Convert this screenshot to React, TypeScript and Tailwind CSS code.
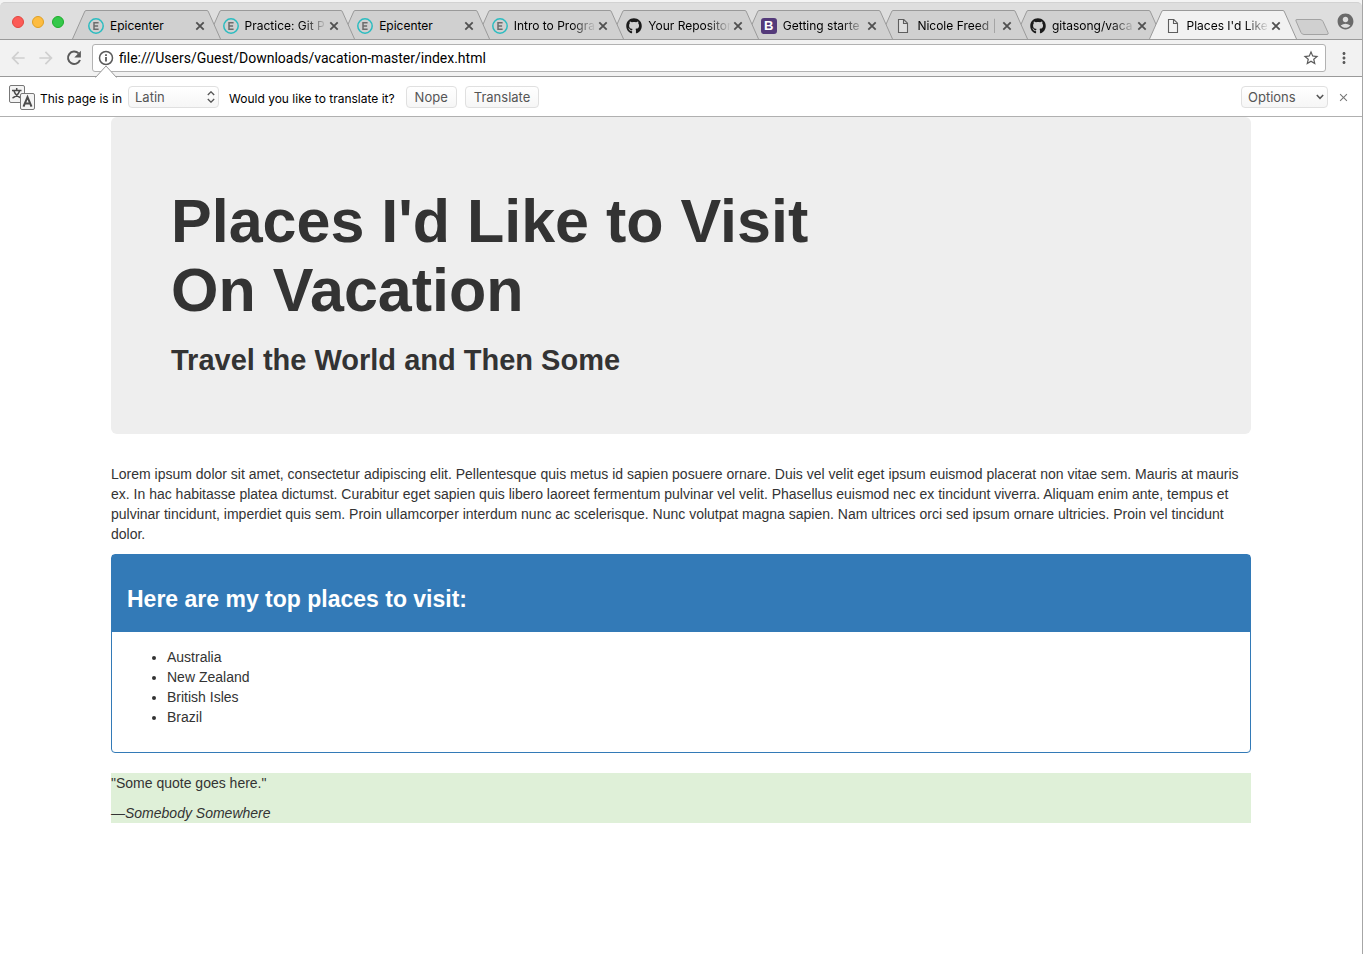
import type { ReactNode } from 'react';
import { FaGithub } from 'react-icons/fa';
import { MdAccountCircle, MdArrowBack, MdArrowForward, MdClose, MdMoreVert, MdStarBorder } from 'react-icons/md';

function EpicenterIcon() {
  return (
    <svg viewBox="0 0 16 16" className="size-4 shrink-0" aria-hidden="true">
      <circle cx="8" cy="8" r="7.2" fill="none" stroke="#2bbcc0" strokeWidth="1.5" />
      <path d="M10.6 4.8H6v6.4h4.6M6 8h4.1" fill="none" stroke="#6c6c6c" strokeWidth="1.5" />
    </svg>
  );
}

function BootstrapIcon() {
  return (
    <span className="flex size-4 shrink-0 items-center justify-center rounded-[3px] bg-[#543a7a] font-['Liberation_Sans',sans-serif] text-[13px] leading-none font-bold text-white">
      B
    </span>
  );
}

function PageIcon() {
  return (
    <svg viewBox="0 0 16 16" className="size-4 shrink-0" aria-hidden="true">
      <path d="M3.5 1.5h5.3l3.7 3.7v9.3h-9zM8.5 1.5v4h4" fill="#f5f5f5" fillOpacity=".4" stroke="#5e5e5e" strokeWidth="1.1" />
    </svg>
  );
}

function ReloadIcon() {
  return (
    <svg viewBox="0 0 20 20" className="size-5" aria-hidden="true">
      <path d="M14.6 5.4A6.2 6.2 0 1 0 16 12" fill="none" stroke="currentColor" strokeWidth="2" />
      <path d="M16.900 2.800v6.600h-6.600z" fill="currentColor" />
    </svg>
  );
}

function InfoIcon() {
  return (
    <svg viewBox="0 0 18 18" className="size-[18px] shrink-0 text-[#5a5a5a]" aria-hidden="true">
      <circle cx="9" cy="9" r="6.5" fill="none" stroke="currentColor" strokeWidth="1.5" />
      <path d="M9 8v4.5M9 5.2v1.7" stroke="currentColor" strokeWidth="1.8" />
    </svg>
  );
}

type Tab = { title: string; icon: ReactNode; z: string; active?: boolean };

const tabs: Tab[] = [
  { title: 'Epicenter', icon: <EpicenterIcon />, z: 'z-[8]' },
  { title: 'Practice: Git P', icon: <EpicenterIcon />, z: 'z-[7]' },
  { title: 'Epicenter', icon: <EpicenterIcon />, z: 'z-[6]' },
  { title: 'Intro to Progra', icon: <EpicenterIcon />, z: 'z-[5]' },
  { title: 'Your Repositor', icon: <FaGithub className="size-4 shrink-0 text-[#1b1b1b]" />, z: 'z-[4]' },
  { title: 'Getting starte', icon: <BootstrapIcon />, z: 'z-[3]' },
  { title: 'Nicole Freed |', icon: <PageIcon />, z: 'z-[2]' },
  { title: 'gitasong/vaca', icon: <FaGithub className="size-4 shrink-0 text-[#1b1b1b]" />, z: 'z-[1]' },
  { title: "Places I'd Like", icon: <PageIcon />, z: 'z-[9]', active: true },
];

function TabItem({ tab }: { tab: Tab }) {
  const fill = tab.active ? '#f2f2f2' : '#d0d0d0';
  const fade = tab.title === 'Epicenter' ? '' : 'mask-r-from-[calc(100%-24px)] mask-r-to-100%';
  return (
    <li className={`relative -mr-[14px] flex h-[29px] min-w-0 flex-1 ${tab.z} ${tab.active ? '-mb-px' : ''}`}>
      <svg viewBox="0 0 14 29" className="h-[29px] w-[14px] shrink-0" aria-hidden="true">
        <path d="M.5 29 L12.5 2 Q13 .5 14 .5 V29z" fill={fill} />
        <path d="M.5 29 L12.5 2 Q13 .5 14 .5" fill="none" stroke="#9a9a9a" />
      </svg>
      <div className={`flex min-w-0 flex-1 items-center border-t border-[#9a9a9a] pt-px pl-[2px] ${tab.active ? 'bg-[#f2f2f2]' : 'bg-[#d0d0d0]'}`}>
        {tab.icon}
        <a href="#" className={`ml-[6px] min-w-0 flex-1 overflow-hidden text-xs whitespace-nowrap text-black ${fade}`}>
          {tab.title}
        </a>
        <button type="button" aria-label="Close tab" className="flex size-[14px] shrink-0 items-center justify-center text-[#505050]">
          <svg viewBox="0 0 14 14" className="size-[14px]" aria-hidden="true">
            <path d="M3.3 3.3l7.4 7.4M10.7 3.3l-7.4 7.4" stroke="currentColor" strokeWidth="1.8" />
          </svg>
        </button>
      </div>
      <svg viewBox="0 0 14 29" className="h-[29px] w-[14px] shrink-0" aria-hidden="true">
        <path d="M0 .5 Q1 .5 1.5 2 L13.5 29 H0z" fill={fill} />
        <path d="M0 .5 Q1 .5 1.5 2 L13.5 29" fill="none" stroke="#9a9a9a" />
      </svg>
    </li>
  );
}

function TabStrip() {
  return (
    <div className="flex h-[38px] items-end rounded-t-[5px] border-t border-b border-t-[#d2d2d2] border-b-[#9a9a9a] bg-[#dedede]">
      <div className="flex h-full w-[72px] shrink-0 items-center gap-2 pt-[2px] pl-3">
        <button type="button" aria-label="Close window" className="size-3 rounded-full border border-[#e2463f] bg-[#fc5b57]" />
        <button type="button" aria-label="Minimize window" className="size-3 rounded-full border border-[#dfa023] bg-[#fdbc40]" />
        <button type="button" aria-label="Zoom window" className="size-3 rounded-full border border-[#1dad2c] bg-[#34c84a]" />
      </div>
      <ul className="flex min-w-0 flex-1 pr-3">
        {tabs.map((tab, i) => (
          <TabItem key={i} tab={tab} />
        ))}
      </ul>
      <button type="button" aria-label="New tab" className="mb-1 h-4 w-[34px] shrink-0">
        <svg viewBox="0 0 34 16" className="h-4 w-[34px]" aria-hidden="true">
          <path d="M2 .5h23q2 0 3 2l5 11q.8 2-1 2H9q-2 0-3-2L1 2Q.3.5 2 .5z" fill="#d0d0d0" stroke="#a3a3a3" />
        </svg>
      </button>
      <button type="button" aria-label="Profile" className="mr-[7px] mb-2 ml-[7px] shrink-0 text-[#6a6a6a]">
        <MdAccountCircle className="size-[19px]" />
      </button>
    </div>
  );
}

function Toolbar() {
  return (
    <div className="flex h-[37px] items-center border-b border-[#9a9a9a] bg-[#f2f2f2] pr-[9px] pl-2">
      <button type="button" aria-label="Back" className="text-[#d0d0d0]"><MdArrowBack className="size-5" /></button>
      <button type="button" aria-label="Forward" className="ml-2 text-[#d0d0d0]"><MdArrowForward className="size-5" /></button>
      <button type="button" aria-label="Reload" className="ml-2 text-[#5a5a5a]"><ReloadIcon /></button>
      <div className="relative ml-2 flex h-7 min-w-0 flex-1 items-center rounded-[3px] border border-[#b2b2b2] bg-white pr-[5px] pl-1">
        <InfoIcon />
        <input
          aria-label="Address"
          defaultValue="file:///Users/Guest/Downloads/vacation-master/index.html"
          className="ml-1 min-w-0 flex-1 bg-transparent font-['Roboto',sans-serif] text-sm text-black outline-none"
        />
        <button type="button" aria-label="Bookmark" className="text-[#5a5a5a]"><MdStarBorder className="size-[18px]" /></button>
        <svg viewBox="0 0 22 13" className="absolute top-[20px] left-[2px] h-[13px] w-[22px]" aria-hidden="true">
          <path d="M0 13L11 1l11 12z" fill="#fff" />
          <path d="M.5 12.5L11 1l10.5 11.5" fill="none" stroke="#9a9a9a" />
        </svg>
      </div>
      <button type="button" aria-label="Menu" className="ml-[9px] text-[#5a5a5a]"><MdMoreVert className="size-[18px]" /></button>
    </div>
  );
}

const control = 'h-[22px] rounded-[4px] border border-[#e0e0e0] bg-linear-to-b from-white to-[#f6f6f6] text-[13px] leading-5 text-[#555]';

function TranslateBar() {
  return (
    <div className="flex h-10 items-center border-b border-[#b0b0b0] bg-white pr-3 pl-2 text-xs text-black">
      <svg viewBox="0 0 28 28" className="size-7 shrink-0" aria-hidden="true">
        <rect x="1.5" y="2.5" width="15" height="17" rx="1.5" fill="#f4f4f4" stroke="#777" />
        <path d="M4 7.500h9.500M8.700 5v2.500M11.500 8c-1 3-3.500 5.500-7 7M6 8c1 3 3.500 5.500 7 7" fill="none" stroke="#4c4c4c" strokeWidth="1.5" />
        <rect x="12.500" y="10.500" width="14" height="16" rx="1.500" fill="#f4f4f4" stroke="#777" />
        <path d="M15.500 23.700L19.500 14l4 9.700M17 20.500h5" fill="none" stroke="#4c4c4c" strokeWidth="2" />
      </svg>
      <label htmlFor="language" className="ml-1 pt-1">This page is in</label>
      <div className="relative ml-[6px]">
        <select id="language" className={`${control} w-[91px] appearance-none pl-[6px]`}>
          <option>Latin</option>
        </select>
        <svg viewBox="0 0 8 12" className="pointer-events-none absolute top-[5px] right-1 h-3 w-2" aria-hidden="true">
          <path d="M.8 4L4 .8 7.2 4M.8 8L4 11.2 7.2 8" fill="none" stroke="#555" strokeWidth="1.3" />
        </svg>
      </div>
      <span className="ml-[10px] pt-1">Would you like to translate it?</span>
      <button type="button" className={`${control} ml-[11px] px-2`}>Nope</button>
      <button type="button" className={`${control} ml-2 px-2`}>Translate</button>
      <div className="relative ml-auto">
        <select aria-label="Options" className={`${control} w-[87px] appearance-none pl-[6px]`}>
          <option>Options</option>
        </select>
        <svg viewBox="0 0 8 6" className="pointer-events-none absolute top-2 right-1 h-[6px] w-2" aria-hidden="true">
          <path d="M.8 1L4 4.3 7.2 1" fill="none" stroke="#555" strokeWidth="1.5" />
        </svg>
      </div>
      <button type="button" aria-label="Close translate bar" className="ml-[9px] pt-[2px] text-[#777]"><MdClose className="size-[13px]" /></button>
    </div>
  );
}

function Page() {
  return (
    <main className="mx-auto w-full max-w-[1140px] font-['Liberation_Sans',sans-serif] text-sm text-[#333]">
      <header className="mb-[30px] rounded-[6px] bg-[#eee] px-[60px] pt-[70px] pb-[57px]">
        <h1 className="mb-[19px] text-[61px] leading-[69px] font-bold">
          Places I'd Like to Visit<br />On Vacation
        </h1>
        <h2 className="text-[29px] leading-[33px] font-bold">Travel the World and Then Some</h2>
      </header>
      <p className="mb-[10px]">
        Lorem ipsum dolor sit amet, consectetur adipiscing elit. Pellentesque quis metus id sapien posuere ornare. Duis vel velit eget ipsum euismod placerat non vitae sem. Mauris at mauris ex. In hac habitasse platea dictumst. Curabitur eget sapien quis libero laoreet fermentum pulvinar vel velit. Phasellus euismod nec ex tincidunt viverra. Aliquam enim ante, tempus et pulvinar tincidunt, imperdiet quis sem. Proin ullamcorper interdum nunc ac scelerisque. Nunc volutpat magna sapien. Nam ultrices orci sed ipsum ornare ultricies. Proin vel tincidunt dolor.
      </p>
      <section className="mb-5 rounded-[4px] border border-[#337ab7] bg-white">
        <div className="bg-[#337ab7] px-[15px] pt-[31px] pb-[19px] text-white">
          <h3 className="text-[23px] leading-[27px] font-bold">Here are my top places to visit:</h3>
        </div>
        <ul className="list-disc px-[15px] pt-[15px] pb-[25px] pl-[55px]">
          <li>Australia</li>
          <li>New Zealand</li>
          <li>British Isles</li>
          <li>Brazil</li>
        </ul>
      </section>
      <div className="bg-[#dff0d8]">
        <p className="mb-[10px]">"Some quote goes here."</p>
        <p><em>—Somebody Somewhere</em></p>
      </div>
    </main>
  );
}

export default function App() {
  return (
    <div className="min-h-screen border-r border-[#a6a6a6] bg-white font-['Inter',sans-serif]">
      <div className="bg-[#f4f4f4] pt-[2px]">
        <TabStrip />
        <Toolbar />
        <TranslateBar />
      </div>
      <Page />
    </div>
  );
}
